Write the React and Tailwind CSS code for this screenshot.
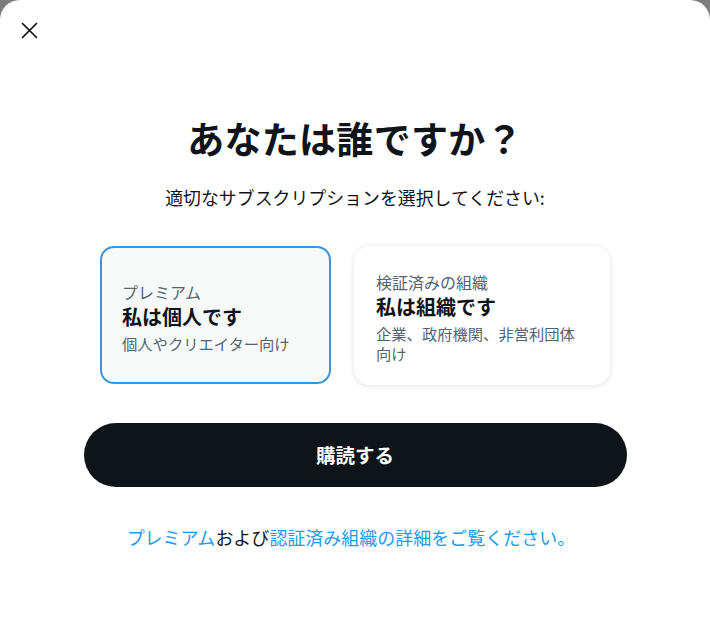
import React from "react";

export default function App() {
  const font = { fontFamily: '"Noto Sans CJK JP", "Noto Sans", sans-serif' };
  return (
    <div className="w-[710px] h-[627px] bg-[#7d7d7d] overflow-hidden" style={font}>
      <div className="w-full h-full bg-white rounded-t-[20px] flex flex-col">
        <div className="h-[60px] flex items-center pl-[20px]">
          <button className="w-[18px] h-[18px] flex items-center justify-center text-[#0f1419]">
            <svg width="17" height="17" viewBox="0 0 17 17" fill="none" stroke="currentColor" strokeWidth="1.7" strokeLinecap="round">
              <path d="M1.5 1.5 L15.5 15.5" />
              <path d="M15.5 1.5 L1.5 15.5" />
            </svg>
          </button>
        </div>
        <div className="flex flex-col items-center">
          <h1 className="mt-[56px] text-[37px] leading-[44px] font-bold text-[#0f1419] tracking-[0.3px]">
            あなたは誰ですか？
          </h1>
          <p className="mt-[25px] text-[17.9px] leading-[24px] text-[#0f1419]">
            適切なサブスクリプションを選択してください:
          </p>
          <div className="mt-[37px] flex gap-[23px]">
            <div className="w-[231px] h-[138px] border-2 border-[#3b95dc] bg-[#f7f9f9] rounded-[14px] px-[20px] pt-[3px] flex flex-col justify-center">
              <div className="text-[16px] leading-[22px] text-[#536471]">プレミアム</div>
              <div className="text-[20px] leading-[28px] font-bold text-[#0f1419]">私は個人です</div>
              <div className="mt-[2px] text-[15.3px] leading-[20px] text-[#536471]">個人やクリエイター向け</div>
            </div>
            <div className="w-[256px] h-[139px] bg-white rounded-[16px] px-[22px] pt-[3px] flex flex-col justify-center shadow-[0_1px_6px_rgba(0,0,0,0.12)]">
              <div className="text-[16px] leading-[22px] text-[#536471]">検証済みの組織</div>
              <div className="text-[20px] leading-[28px] font-bold text-[#0f1419]">私は組織です</div>
              <div className="mt-[2px] text-[15.3px] leading-[20px] text-[#536471]">企業、政府機関、非営利団体<br />向け</div>
            </div>
          </div>
          <button className="mt-[38px] w-[543px] h-[64px] rounded-full bg-[#0f1419] text-white text-[19.5px] font-bold">
            購読する
          </button>
          <p className="mt-[38px] mr-[8px] text-[18px] leading-[24px] text-[#0f1419]">
            <span className="text-[#1d9bf0]">プレミアム</span>および<span className="text-[#1d9bf0]">認証済み組織の詳細をご覧ください。</span>
          </p>
        </div>
      </div>
    </div>
  );
}
